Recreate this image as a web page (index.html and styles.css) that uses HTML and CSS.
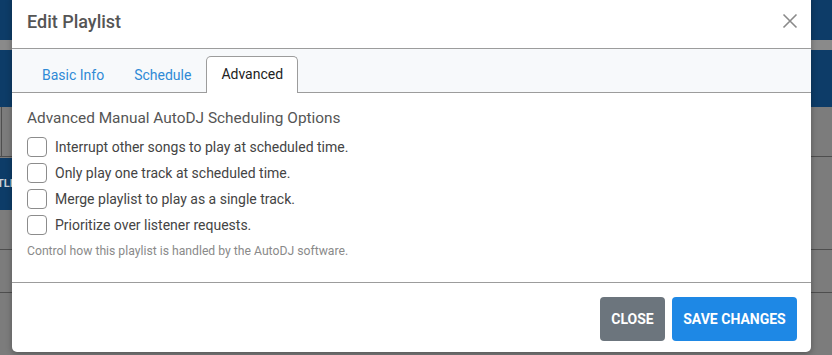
FILE: index.html
```html
<!DOCTYPE html>
<html>
<head>
<meta charset="utf-8">
<link rel="stylesheet" href="styles.css">
</head>
<body>
<div class="page">
  <div class="bg-top"></div>
  <div class="bg-band"></div>
  <div class="bg-nav"></div>
  <div class="bg-row bg-row1"><div class="bg-input"></div></div>
  <div class="bg-row bg-row2"><div class="bg-btn">TLI</div></div>
  <div class="bg-row bg-row3"></div>
</div>

<div class="modal">
  <div class="modal-header">
    <h5 class="modal-title">Edit Playlist</h5>
    <button class="close-btn" aria-label="Close">
      <svg width="16" height="16" viewBox="0 0 16 16"><path d="M1.5 1.5 L14.5 14.5 M14.5 1.5 L1.5 14.5" stroke="#8a8a8a" stroke-width="1.6" fill="none"/></svg>
    </button>
  </div>
  <div class="tabs-bar">
    <ul class="tabs">
      <li class="tab">Basic Info</li>
      <li class="tab">Schedule</li>
      <li class="tab active">Advanced</li>
    </ul>
  </div>
  <div class="modal-body">
    <div class="section-title">Advanced Manual AutoDJ Scheduling Options</div>
    <label class="check-row"><span class="box"></span><span>Interrupt other songs to play at scheduled time.</span></label>
    <label class="check-row"><span class="box"></span><span>Only play one track at scheduled time.</span></label>
    <label class="check-row"><span class="box"></span><span>Merge playlist to play as a single track.</span></label>
    <label class="check-row"><span class="box"></span><span>Prioritize over listener requests.</span></label>
    <div class="help">Control how this playlist is handled by the AutoDJ software.</div>
  </div>
  <div class="modal-footer">
    <button class="btn btn-gray">CLOSE</button>
    <button class="btn btn-blue">SAVE CHANGES</button>
  </div>
</div>
</body>
</html>
```
FILE: styles.css
```css
html, body {
  margin: 0;
  padding: 0;
}
body {
  width: 832px;
  height: 355px;
  overflow: hidden;
  background: #7c7c7c;
  font-family: Roboto, "Liberation Sans", sans-serif;
  position: relative;
}
.page {
  display: flex;
  flex-direction: column;
}
.bg-top { height: 40px; background: #0d3c68; }
.bg-band { height: 10px; background: #8a8a8a; }
.bg-nav { height: 57px; background: #0d3c68; }
.bg-row { background: #7c7c7c; border-bottom: 1px solid #4e4e4e; }
.bg-row1 { height: 49px; }
.bg-row2 { height: 93px; padding-top: 6px; box-sizing: border-box; }
.bg-row3 { height: 42px; }
.bg-input {
  width: 1px;
  height: 50px;
  border-right: 1px solid #4e4e4e;
}
.bg-btn {
  width: 40px;
  height: 52px;
  margin-left: -27px;
  background: #0d3c68;
  color: #c9d0d9;
  font-size: 11px;
  font-weight: 700;
  line-height: 52px;
  text-align: right;
  box-sizing: border-box;
  margin-top: -5px;
}

.modal {
  position: absolute;
  left: 12px;
  top: -6px;
  width: 799px;
  height: 358px;
  background: #fff;
  border-radius: 5px;
  box-shadow: 0 2px 6px rgba(0,0,0,0.3);
  display: flex;
  flex-direction: column;
  overflow: hidden;
}
.modal-header {
  height: 55px;
  flex: none;
  box-sizing: border-box;
  padding: 0 13px 0 15px;
  display: flex;
  align-items: center;
  justify-content: space-between;
  border-bottom: 1px solid #9c9c9c;
}
.modal-title {
  margin: 0;
  font-size: 18px;
  font-weight: 500;
  color: #555;
}
.close-btn {
  border: 0;
  background: none;
  padding: 0;
  margin: 0;
  width: 16px;
  height: 16px;
  display: flex;
}
.tabs-bar {
  background: #f7f9fb;
  height: 44px;
  flex: none;
  box-sizing: border-box;
  padding: 8px 15px 0;
  border-bottom: 1px solid #9c9c9c;
}
.tabs {
  list-style: none;
  margin: 0;
  padding: 0;
  display: flex;
  height: 36px;
}
.tab {
  padding: 0 14px;
  height: 36px;
  line-height: 35px;
  font-size: 14px;
  color: #2f8ad6;
  box-sizing: border-box;
  border: 1px solid transparent;
  border-bottom: 0;
  border-radius: 5px 5px 0 0;
}
.tab.active {
  color: #222;
  background: #fff;
  border-color: #9c9c9c;
  height: 37px;
  margin-top: -1px;
  line-height: 35px;
}
.modal-body {
  padding: 16px 15px 0;
  height: 190px;
  flex: none;
  box-sizing: border-box;
  border-bottom: 1px solid #9c9c9c;
}
.section-title {
  font-size: 15.4px;
  color: #555;
  line-height: 18px;
  margin-bottom: 7px;
}
.check-row {
  display: flex;
  align-items: center;
  gap: 8px;
  height: 26px;
  font-size: 14px;
  color: #444;
}
.box {
  width: 20px;
  height: 20px;
  box-sizing: border-box;
  border: 1px solid #8c8c8c;
  border-radius: 4px;
  background: #fff;
  flex: none;
}
.help {
  font-size: 12.2px;
  line-height: 14px;
  color: #8a8a8a;
  margin-top: 6px;
}
.modal-footer {
  display: flex;
  justify-content: flex-end;
  gap: 7px;
  padding: 14px 14px 0;
}
.btn {
  height: 44px;
  border: 0;
  border-radius: 4px;
  color: #fff;
  font-family: Roboto, "Liberation Sans", sans-serif;
  font-size: 14px;
  font-weight: 700;
  padding: 0;
}
.btn-gray { background: #6c757d; width: 65px; }
.btn-blue { background: #1e88e5; width: 125px; }
```
